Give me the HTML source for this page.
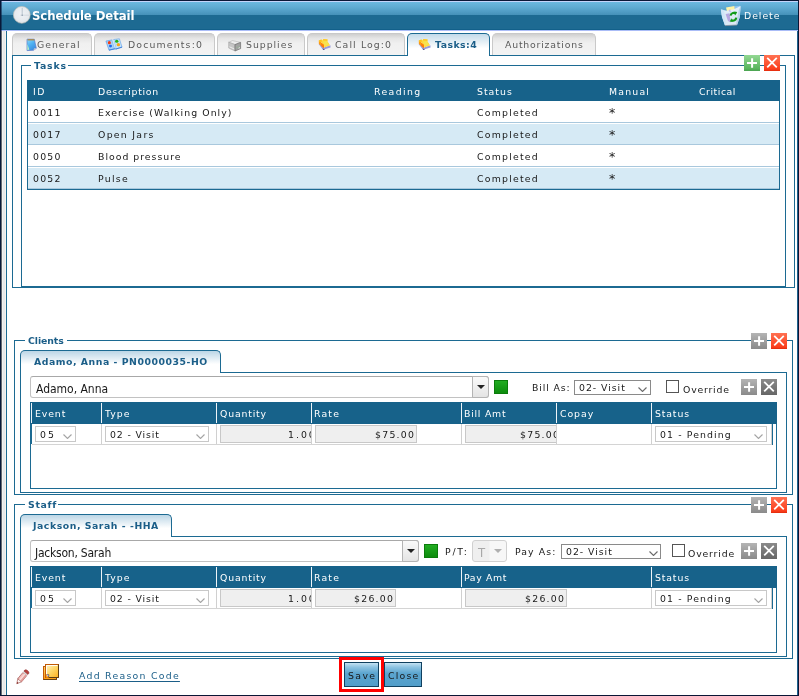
<!DOCTYPE html>
<html><head><meta charset="utf-8"><title>Schedule Detail</title>
<style>
*{box-sizing:border-box;margin:0;padding:0}
html,body{width:799px;height:696px;overflow:hidden;background:#fff}
body{position:relative;font-family:"DejaVu Sans","Liberation Sans",sans-serif;font-size:9.33px;letter-spacing:1px;color:#181818;line-height:12px}
.a{position:absolute}
.t{position:absolute;white-space:nowrap;height:12px;line-height:12px}
.b{font-weight:bold}
.blue{color:#1b5e88}
.w{color:#fff}
.g{color:#5a5a5a}
.tab{position:absolute;top:33px;height:22px;border:1px solid #c9c9c9;border-bottom:none;border-radius:5px 5px 0 0;background:linear-gradient(#cfcfcf,#e6e6e6 22%,#f0f0f0 45%,#f3f3f3)}
.atab{position:absolute;height:23px;border:1px solid #1c6a92;border-bottom:none;border-radius:5px 5px 0 0;background:linear-gradient(#c3dbe9,#fff 65%)}
.box{position:absolute;border:1px solid #1c6a92}
.hd{position:absolute;background:#17628a}
.sep{position:absolute;width:1px;background:#eef4f8}
.sel{position:absolute;border:1px solid #c8c8c8;background:#fff}
.inp{position:absolute;border:1px solid #c8c8c8;background:#efefef}
.vl{position:absolute;width:1px;background:#d0d0d0}
.ti{font-family:"DejaVu Sans Condensed","DejaVu Sans",sans-serif;font-size:12px}
.btn{position:absolute;height:25px;border:1px solid #10405f;background:linear-gradient(#c4e2f3,#8dc3e2 18%,#5ba5cf 45%,#529eca)}
.ic{position:absolute;width:16px;height:16px}
.lgb{position:absolute;background:#fff;height:3px}
#wrap{position:absolute;left:0;top:0;width:799px;height:696px;will-change:transform;transform:translateZ(0)}
</style></head><body><div id="wrap">
<!-- frame -->
<div class="a" style="left:0;top:0;width:799px;height:31px;background:#1d6a92"></div>
<div class="a" style="left:0;top:2px;width:799px;height:13px;background:linear-gradient(#6bb8e0,#5fabd3 40%,#4591b9)"></div>
<div class="a" style="left:0;top:0;width:799px;height:1px;background:#0b1738"></div>
<div class="a" style="left:0;top:1px;width:799px;height:1px;background:#c4d4fb"></div>
<div class="a" style="left:0;top:29px;width:799px;height:1px;background:#12608a"></div>
<div class="a" style="left:0;top:30px;width:799px;height:1px;background:#aabcf7"></div>
<div class="a" style="left:1px;top:31px;width:1px;height:664px;background:#676a70"></div>
<div class="a" style="left:2px;top:31px;width:1px;height:664px;background:#f0f0f0"></div>
<div class="a" style="left:3px;top:31px;width:2px;height:664px;background:#e8e8e8"></div>
<div class="a" style="left:5px;top:31px;width:1px;height:664px;background:#f4f1ef"></div>
<div class="a" style="left:6px;top:31px;width:1px;height:664px;background:#1c6a92"></div>
<div class="a" style="left:0;top:0;width:1px;height:696px;background:#081838"></div>
<div class="a" style="left:1px;top:0;width:1px;height:31px;background:rgba(10,24,56,0.55)"></div>
<div class="a" style="left:797px;top:31px;width:1px;height:665px;background:#1f6390"></div>
<div class="a" style="left:798px;top:0;width:1px;height:696px;background:#0a1636"></div>
<div class="a" style="left:0;top:695px;width:799px;height:1px;background:#0a1636"></div>

<svg width="0" height="0" class="a"><defs>
<linearGradient id="ggreen" x1="0" y1="0" x2="0" y2="1"><stop offset="0" stop-color="#93d893"/><stop offset="0.85" stop-color="#5ab65e"/><stop offset="1" stop-color="#4aa250"/></linearGradient>
<linearGradient id="gred" x1="0" y1="0" x2="0" y2="1"><stop offset="0" stop-color="#ff7152"/><stop offset="0.88" stop-color="#fb3e1c"/><stop offset="1" stop-color="#e02a0c"/></linearGradient>
<linearGradient id="ggray" x1="0" y1="0" x2="0" y2="1"><stop offset="0" stop-color="#b4b4b4"/><stop offset="1" stop-color="#8a8a8a"/></linearGradient>
<linearGradient id="gdgray" x1="0" y1="0" x2="0" y2="1"><stop offset="0" stop-color="#8a8a8a"/><stop offset="1" stop-color="#666"/></linearGradient>
</defs></svg>
<svg class="a" style="left:12px;top:5px" width="20" height="20" viewBox="0 0 20 20"><defs><radialGradient id="ck" cx="0.5" cy="0.45" r="0.55"><stop offset="0" stop-color="#eff2f5"/><stop offset="0.75" stop-color="#e6eaee"/><stop offset="1" stop-color="#d9dee3"/></radialGradient></defs><circle cx="9.8" cy="9.9" r="8.4" fill="url(#ck)" stroke="#c9c2b6" stroke-width="0.6"/><path d="M10.2 2.8V10.2" stroke="#a3b0bd" stroke-width="0.7" fill="none"/><path d="M8.4 10.2H17" stroke="#cdd3da" stroke-width="0.8" fill="none"/><circle cx="10.2" cy="10.2" r="0.7" fill="#8a99aa"/></svg>
<svg class="a" style="left:720px;top:4px" width="22" height="23" viewBox="0 0 22 23"><path d="M6 3.6L14.5 2L15 6.5L7 7.5Z" fill="#fff3a6"/><path d="M14.6 2.2L20.2 1.8L19.8 7L15.2 6.4Z" fill="#8fc3f5"/><path d="M0.9 5.6L7 6.8L14 5.2L20.6 2L19.8 13L17 21L5 21.6L2 13Z" fill="#e9f3fc" fill-opacity="0.93"/><path d="M0.9 5.6L4 6L6 20.5L5 21.6L2 13Z" fill="#cfe6f8"/><path d="M20.6 2L19.8 13L17 21L16 20L18.8 6Z" fill="#b9d4ea"/><path d="M5 21.6L17 21" stroke="#8a93a0" stroke-width="0.8"/><path d="M5.6 10L9.6 9.2L10.6 18.6L8 17Z" fill="#b6a8e2"/><path d="M8.6 6.8L10.2 5L11 9Z" fill="#c8bdea"/><g fill="none" stroke="#109a18" stroke-width="2.1"><path d="M10.6 11.6A3 3.2 0 0 1 15.4 9.6"/><path d="M16.2 13.6A3 3.2 0 0 1 11.4 16"/></g><path d="M14.2 7.4L17.2 8L15.4 11.4Z" fill="#109a18"/><path d="M12.8 18L9.8 17.4L11.4 14.2Z" fill="#109a18"/></svg>
<div class="t w" style="left:32px;top:10px;letter-spacing:-0.07px;font-family:'DejaVu Sans Condensed','DejaVu Sans',sans-serif;font-size:13px;font-weight:bold">Schedule Detail</div>
<div class="t w" style="left:744px;top:10px;letter-spacing:0.96px">Delete</div>
<div class="tab" style="left:12px;width:80px"></div>
<div class="tab" style="left:94px;width:121px"></div>
<div class="tab" style="left:217px;width:88px"></div>
<div class="tab" style="left:307px;width:98px"></div>
<div class="tab" style="left:492px;width:104px"></div>
<div class="t g" style="left:37px;top:39px;letter-spacing:0.98px">General</div>
<div class="t g" style="left:128px;top:39px;letter-spacing:1.16px">Documents:0</div>
<div class="t g" style="left:246px;top:39px;letter-spacing:0.97px">Supplies</div>
<div class="t g" style="left:335px;top:39px;letter-spacing:1.10px">Call Log:0</div>
<div class="t g" style="left:505px;top:39px;letter-spacing:0.80px">Authorizations</div>
<div class="box" style="left:12px;top:55px;width:783px;height:233px"></div>
<div class="atab" style="left:407px;top:33px;width:83px"></div>
<div class="box" style="left:21px;top:65px;width:765px;height:222px"></div>
<div class="lgb" style="left:31px;top:64px;width:37px"></div>
<div class="t b blue" style="left:435px;top:39px;letter-spacing:0.47px;font-weight:bold">Tasks:4</div>
<svg class="a" style="left:25.5px;top:38.2px" width="12" height="14" viewBox="0 0 12 14"><defs><linearGradient id="np" x1="0" y1="0" x2="0.6" y2="1"><stop offset="0" stop-color="#8fdcf8"/><stop offset="0.5" stop-color="#4fb2f2"/><stop offset="1" stop-color="#3a8ce0"/></linearGradient></defs><path d="M1 1.2L8.3 1.2L10.3 10.3L7.6 12.2L1 12.6Z" fill="url(#np)" stroke="#5b78c8" stroke-width="0.7"/><path d="M1.3 6L3.4 11.6L1.3 12.2Z" fill="#b9ecc4"/><path d="M1.6 1L8.2 1L8.5 2.6L1.6 2.6Z" fill="#a48d5c"/><path d="M7.6 12.2L10.3 10.3L8 10.6Z" fill="#e8d8c8"/></svg>
<svg class="a" style="left:105px;top:38px" width="18" height="13.3" viewBox="0 0 19 14"><path d="M1 3.2L7.6 2L10.4 11.4L4.2 12.8Z" fill="#a6d2f7" stroke="#5a9ae6" stroke-width="0.7"/><path d="M9 1.6L15.2 0.8L18 9.6L11.6 11.6Z" fill="#c2e2fa" stroke="#6aa6ea" stroke-width="0.7"/><path d="M7.6 2L9 1.6L11.6 11.6L10.4 11.4Z" fill="#cfe8fb"/><ellipse cx="4.6" cy="4.9" rx="1.6" ry="1.8" fill="#f43a12"/><ellipse cx="5.8" cy="8.5" rx="1.6" ry="1.5" fill="#1f66ee"/><ellipse cx="12.4" cy="3.4" rx="1.8" ry="1.7" fill="#22b41c"/><ellipse cx="14.1" cy="7" rx="1.8" ry="1.7" fill="#f7a81a"/><path d="M4.2 12.8L10.4 11.4L11.6 11.6L18 9.6" fill="none" stroke="#3d7fdc" stroke-width="1"/></svg>
<svg class="a" style="left:228px;top:39.6px" width="14" height="12" viewBox="0 0 14 12"><path d="M0.7 2.2L4.6 0.6L12.6 2.4L7 4.6Z" fill="#eeeeee" stroke="#a8a8a8" stroke-width="0.5"/><path d="M0.7 2.2L7 4.6L7 11L0.7 8Z" fill="#c6c6c6" stroke="#9a9a9a" stroke-width="0.5"/><path d="M7 4.6L12.6 2.4L12.6 8.6L7 11Z" fill="#a2a2a2" stroke="#6e6e6e" stroke-width="0.7"/><path d="M1.5 6.8L6.3 9" stroke="#ededed" stroke-width="1"/><path d="M7.8 8L11.8 6.4" stroke="#8fb38f" stroke-width="0.6"/><path d="M10.6 8.2L11.8 7.7" stroke="#f4f4f4" stroke-width="1"/></svg>
<svg class="a" style="left:318px;top:38px" width="14" height="13" viewBox="0 0 14 13"><path d="M0.8 6.2L5 11.8L12.6 9.4L12.4 7.2L6 9.4L1 5Z" fill="#9a9bdc"/><path d="M4.6 10.6L5.2 11.9L7.2 11.4Z" fill="#4a4a80"/><path d="M0.8 2.4L0.9 6L6 10.2L6.2 6.6Z" fill="#ff9a12"/><path d="M3 5L6.1 7.2L6 10.2L3.4 8.2Z" fill="#ff7e0a"/><path d="M0.8 2.4L3.4 1.6L4.6 2.4L5.2 0.9L9.6 1.6L9.4 3.2L12 7.2L6.2 9.6L6.2 6.6Z" fill="#ffd83a"/><path d="M4.8 3.6L9 3L11 6.8L6.8 8Z" fill="#f7e34e"/><path d="M0.8 2.4L3.4 1.6L4 3.6L1.6 4.2Z" fill="#ffc21e"/><path d="M5.2 0.9L9.6 1.6L9.2 3L5.4 2.6Z" fill="#ffc928"/></svg>
<svg class="a" style="left:418px;top:38.3px" width="14" height="13" viewBox="0 0 14 13"><path d="M0.8 6.2L5 11.8L12.6 9.4L12.4 7.2L6 9.4L1 5Z" fill="#9a9bdc"/><path d="M4.6 10.6L5.2 11.9L7.2 11.4Z" fill="#4a4a80"/><path d="M0.8 2.4L0.9 6L6 10.2L6.2 6.6Z" fill="#ff9a12"/><path d="M3 5L6.1 7.2L6 10.2L3.4 8.2Z" fill="#ff7e0a"/><path d="M0.8 2.4L3.4 1.6L4.6 2.4L5.2 0.9L9.6 1.6L9.4 3.2L12 7.2L6.2 9.6L6.2 6.6Z" fill="#ffd83a"/><path d="M4.8 3.6L9 3L11 6.8L6.8 8Z" fill="#f7e34e"/><path d="M0.8 2.4L3.4 1.6L4 3.6L1.6 4.2Z" fill="#ffc21e"/><path d="M5.2 0.9L9.6 1.6L9.2 3L5.4 2.6Z" fill="#ffc928"/></svg>
<div class="t b blue" style="left:34px;top:60px;letter-spacing:0.80px;font-weight:bold">Tasks</div>
<svg class="ic" style="left:744px;top:55px" viewBox="0 0 16 16"><rect width="16" height="16" fill="url(#ggreen)"/><path d="M8.1 3.2V12.8M3 8H13" stroke="#fff" stroke-width="2"/></svg>
<svg class="ic" style="left:764px;top:55px" viewBox="0 0 16 16"><rect width="16" height="16" fill="url(#gred)"/><path d="M3.2 2.8L12.8 12.4M12.8 2.8L3.2 12.4" stroke="#fff" stroke-width="1.8"/></svg>
<div class="box" style="left:27px;top:80px;width:753px;height:110px;background:#fff"></div>
<div class="hd" style="left:27px;top:80px;width:753px;height:21px"></div>
<div class="a" style="left:28px;top:101px;width:751px;height:22px;border-bottom:1px solid #a9c8dd"></div>
<div class="a" style="left:28px;top:123px;width:751px;height:22px;background:#d6eaf5;border-top:1px solid #fff;border-bottom:1px solid #a9c8dd"></div>
<div class="a" style="left:28px;top:145px;width:751px;height:22px;border-bottom:1px solid #a9c8dd"></div>
<div class="a" style="left:28px;top:167px;width:751px;height:22px;background:#d6eaf5;border-top:1px solid #fff;border-bottom:1px solid #a9c8dd"></div>

<div class="t w" style="left:33px;top:86px;letter-spacing:1.60px">ID</div>
<div class="t w" style="left:98px;top:86px;letter-spacing:0.70px">Description</div>
<div class="t w" style="left:374px;top:86px;letter-spacing:1.38px">Reading</div>
<div class="t w" style="left:477px;top:86px;letter-spacing:1.01px">Status</div>
<div class="t w" style="left:609px;top:86px;letter-spacing:1.21px">Manual</div>
<div class="t w" style="left:699px;top:86px;letter-spacing:0.54px">Critical</div>
<div class="t" style="left:33px;top:107px;letter-spacing:1.20px">0011</div>
<div class="t" style="left:98px;top:107px;letter-spacing:1.06px">Exercise (Walking Only)</div>
<div class="t" style="left:477px;top:107px;letter-spacing:1.23px">Completed</div>
<div class="t" style="left:609px;top:107px;letter-spacing:0.00px;font-size:12.5px">*</div>
<div class="t" style="left:33px;top:129px;letter-spacing:1.20px">0017</div>
<div class="t" style="left:98px;top:129px;letter-spacing:1.29px">Open Jars</div>
<div class="t" style="left:477px;top:129px;letter-spacing:1.23px">Completed</div>
<div class="t" style="left:609px;top:129px;letter-spacing:0.00px;font-size:12.5px">*</div>
<div class="t" style="left:33px;top:151px;letter-spacing:1.20px">0050</div>
<div class="t" style="left:98px;top:151px;letter-spacing:1.00px">Blood pressure</div>
<div class="t" style="left:477px;top:151px;letter-spacing:1.23px">Completed</div>
<div class="t" style="left:609px;top:151px;letter-spacing:0.00px;font-size:12.5px">*</div>
<div class="t" style="left:33px;top:173px;letter-spacing:1.20px">0052</div>
<div class="t" style="left:98px;top:173px;letter-spacing:1.30px">Pulse</div>
<div class="t" style="left:477px;top:173px;letter-spacing:1.23px">Completed</div>
<div class="t" style="left:609px;top:173px;letter-spacing:0.00px;font-size:12.5px">*</div>
<div class="box" style="left:14px;top:340px;width:779px;height:155px"></div>
<div class="lgb" style="left:25px;top:339px;width:42px"></div>
<div class="t b blue" style="left:28px;top:335px;letter-spacing:-0.08px;font-weight:bold">Clients</div>
<svg class="ic" style="left:751px;top:333px" viewBox="0 0 16 16"><rect width="16" height="16" fill="url(#ggray)"/><path d="M8.1 3.2V12.8M3 8H13" stroke="#fff" stroke-width="2"/></svg>
<svg class="ic" style="left:771px;top:333px" viewBox="0 0 16 16"><rect width="16" height="16" fill="url(#gred)"/><path d="M3.2 2.8L12.8 12.4M12.8 2.8L3.2 12.4" stroke="#fff" stroke-width="1.8"/></svg>
<div class="box" style="left:20px;top:372px;width:767px;height:121px"></div>
<div class="atab" style="left:20px;top:350px;width:201px;background:linear-gradient(#bcd6e6,#fff 60%)"></div>
<div class="t b blue" style="left:34px;top:356px;letter-spacing:0.53px;font-weight:bold">Adamo, Anna - PN0000035-HO</div>
<div class="a" style="left:30px;top:376px;width:459px;height:22px;border:1px solid #c2c2c2;border-top-color:#a8a8a8;border-radius:3px;background:#fff"></div>
<div class="t ti" style="left:36px;top:383px;letter-spacing:-0.02px;font-family:'DejaVu Sans Condensed','DejaVu Sans',sans-serif;font-size:12px">Adamo, Anna</div>
<div class="a" style="left:472px;top:376px;width:17px;height:22px;border:1px solid #b4b4b4;border-radius:0 3px 3px 0;background:linear-gradient(#fafafa,#e4e4e4)"></div>
<svg class="a" style="left:477px;top:385px" width="8" height="4"><path d="M0 0H8L4 4Z" fill="#222"/></svg>
<div class="a" style="left:494px;top:380px;width:14px;height:14px;background:linear-gradient(#22ad22,#0d8c0d);border:1px solid #0b7c0b"></div>
<div class="t" style="left:532px;top:382px;letter-spacing:0.86px">Bill As:</div>
<div class="sel" style="left:574px;top:380px;width:77px;height:15px;border-color:#8a8a8a"></div>
<div class="t" style="left:579px;top:382px;letter-spacing:0.97px">02- Visit</div>
<svg class="a" style="left:638px;top:387px" width="9" height="5"><path d="M0.5 0.5L4.5 4.5L8.5 0.5" fill="none" stroke="#6a6a6a" stroke-width="1.1"/></svg>
<div class="a" style="left:666px;top:380px;width:13px;height:13px;border:1px solid #555;background:#fff"></div>
<div class="t" style="left:683px;top:384px;letter-spacing:0.79px">Override</div>
<svg class="ic" style="left:741px;top:379px" viewBox="0 0 16 16"><rect width="16" height="16" fill="url(#ggray)"/><path d="M8.1 3.2V12.8M3 8H13" stroke="#fff" stroke-width="2"/></svg>
<svg class="ic" style="left:761px;top:379px" viewBox="0 0 16 16"><rect width="16" height="16" fill="url(#gdgray)"/><path d="M3.2 2.8L12.8 12.4M12.8 2.8L3.2 12.4" stroke="#fff" stroke-width="1.8"/></svg>
<div class="box" style="left:30px;top:402px;width:747px;height:87px"></div>
<div class="hd" style="left:30px;top:402px;width:747px;height:22px"></div>
<div class="t w" style="left:35px;top:408px;letter-spacing:0.89px">Event</div>
<div class="t w" style="left:105px;top:408px;letter-spacing:1.02px">Type</div>
<div class="t w" style="left:220px;top:408px;letter-spacing:0.83px">Quantity</div>
<div class="t w" style="left:314px;top:408px;letter-spacing:1.18px">Rate</div>
<div class="t w" style="left:464px;top:408px;letter-spacing:0.76px">Bill Amt</div>
<div class="t w" style="left:560px;top:408px;letter-spacing:0.95px">Copay</div>
<div class="t w" style="left:655px;top:408px;letter-spacing:0.86px">Status</div>
<div class="sep" style="left:31px;top:403px;height:20px"></div>
<div class="sep" style="left:101px;top:403px;height:20px"></div>
<div class="sep" style="left:216px;top:403px;height:20px"></div>
<div class="sep" style="left:311px;top:403px;height:20px"></div>
<div class="sep" style="left:461px;top:403px;height:20px"></div>
<div class="sep" style="left:556px;top:403px;height:20px"></div>
<div class="sep" style="left:651px;top:403px;height:20px"></div>
<div class="a" style="left:30px;top:424px;width:2px;height:20px;background:#1c6a92"></div>
<div class="a" style="left:32px;top:444px;width:740px;height:1px;background:#d4d4d4"></div>
<div class="vl" style="left:101px;top:424px;height:20px"></div>
<div class="vl" style="left:216px;top:424px;height:20px"></div>
<div class="vl" style="left:311px;top:424px;height:20px"></div>
<div class="vl" style="left:461px;top:424px;height:20px"></div>
<div class="vl" style="left:556px;top:424px;height:20px"></div>
<div class="vl" style="left:651px;top:424px;height:20px"></div>
<div class="vl" style="left:771px;top:424px;height:21px"></div>
<div class="a" style="left:772px;top:424px;width:1px;height:21px;background:#1c6a92"></div>
<div class="sel" style="left:35px;top:426px;width:41px;height:16px"></div>
<div class="t" style="left:40px;top:429px;letter-spacing:2.00px">05</div>
<svg class="a" style="left:63px;top:434px" width="9" height="5"><path d="M0.5 0.5L4.5 4.5L8.5 0.5" fill="none" stroke="#a4a4a4" stroke-width="1.1"/></svg>
<div class="sel" style="left:105px;top:426px;width:104px;height:16px"></div>
<div class="t" style="left:110px;top:429px;letter-spacing:0.87px">02 - Visit</div>
<svg class="a" style="left:196px;top:434px" width="9" height="5"><path d="M0.5 0.5L4.5 4.5L8.5 0.5" fill="none" stroke="#a4a4a4" stroke-width="1.1"/></svg>
<div class="inp" style="left:220px;top:425px;width:91px;height:18px;border-right:none"></div>
<div class="a" style="left:280px;top:427px;width:31px;height:14px;overflow:hidden"><div class="t" style="left:8px;top:2px;letter-spacing:2.00px">1.00</div></div>
<div class="inp" style="left:315px;top:425px;width:102px;height:18px"></div>
<div class="t" style="left:375px;top:429px;letter-spacing:1.26px">$75.00</div>
<div class="inp" style="left:465px;top:425px;width:91px;height:18px;border-right:none"></div>
<div class="a" style="left:510px;top:427px;width:46px;height:14px;overflow:hidden"><div class="t" style="left:10px;top:2px;letter-spacing:1.26px">$75.00</div></div>
<div class="sel" style="left:655px;top:426px;width:112px;height:16px"></div>
<div class="t" style="left:660px;top:429px;letter-spacing:1.12px">01 - Pending</div>
<svg class="a" style="left:754px;top:434px" width="9" height="5"><path d="M0.5 0.5L4.5 4.5L8.5 0.5" fill="none" stroke="#a4a4a4" stroke-width="1.1"/></svg>
<div class="box" style="left:14px;top:504px;width:779px;height:155px"></div>
<div class="lgb" style="left:25px;top:503px;width:33px"></div>
<div class="t b blue" style="left:28px;top:499px;letter-spacing:0.66px;font-weight:bold">Staff</div>
<svg class="ic" style="left:751px;top:497px" viewBox="0 0 16 16"><rect width="16" height="16" fill="url(#ggray)"/><path d="M8.1 3.2V12.8M3 8H13" stroke="#fff" stroke-width="2"/></svg>
<svg class="ic" style="left:771px;top:497px" viewBox="0 0 16 16"><rect width="16" height="16" fill="url(#gred)"/><path d="M3.2 2.8L12.8 12.4M12.8 2.8L3.2 12.4" stroke="#fff" stroke-width="1.8"/></svg>
<div class="box" style="left:20px;top:536px;width:767px;height:121px"></div>
<div class="atab" style="left:20px;top:514px;width:152px;background:linear-gradient(#bcd6e6,#fff 60%)"></div>
<div class="t b blue" style="left:33px;top:520px;letter-spacing:0.54px;font-weight:bold">Jackson, Sarah - -HHA</div>
<div class="a" style="left:30px;top:540px;width:389px;height:22px;border:1px solid #c2c2c2;border-top-color:#a8a8a8;border-radius:3px;background:#fff"></div>
<div class="t ti" style="left:35px;top:547px;letter-spacing:-0.23px;font-family:'DejaVu Sans Condensed','DejaVu Sans',sans-serif;font-size:12px">Jackson, Sarah</div>
<div class="a" style="left:402px;top:540px;width:17px;height:22px;border:1px solid #b4b4b4;border-radius:0 3px 3px 0;background:linear-gradient(#fafafa,#e4e4e4)"></div>
<svg class="a" style="left:407px;top:549px" width="8" height="4"><path d="M0 0H8L4 4Z" fill="#222"/></svg>
<div class="a" style="left:424px;top:544px;width:14px;height:14px;background:linear-gradient(#22ad22,#0d8c0d);border:1px solid #0b7c0b"></div>
<div class="t" style="left:445px;top:546px;letter-spacing:1.77px">P/T:</div>
<div class="a" style="left:472px;top:540px;width:35px;height:22px;border:1px solid #d0d0d0;border-radius:3px;background:linear-gradient(90deg,#efefef 0,#efefef 16px,#f7f7f7 17px,#f7f7f7)"></div>
<div class="t ti" style="left:478px;top:547px;letter-spacing:0.00px;font-family:'DejaVu Sans Condensed','DejaVu Sans',sans-serif;font-size:12px;font-size:13px;color:#a8a8a8">T</div>
<svg class="a" style="left:494px;top:549px" width="8" height="4"><path d="M0 0H8L4 4Z" fill="#b0b0b0"/></svg>
<div class="t" style="left:515px;top:546px;letter-spacing:1.09px">Pay As:</div>
<div class="sel" style="left:561px;top:544px;width:100px;height:15px;border-color:#8a8a8a"></div>
<div class="t" style="left:566px;top:546px;letter-spacing:0.97px">02- Visit</div>
<svg class="a" style="left:649px;top:551px" width="9" height="5"><path d="M0.5 0.5L4.5 4.5L8.5 0.5" fill="none" stroke="#6a6a6a" stroke-width="1.1"/></svg>
<div class="a" style="left:672px;top:544px;width:13px;height:13px;border:1px solid #555;background:#fff"></div>
<div class="t" style="left:688px;top:548px;letter-spacing:0.83px">Override</div>
<svg class="ic" style="left:741px;top:543px" viewBox="0 0 16 16"><rect width="16" height="16" fill="url(#ggray)"/><path d="M8.1 3.2V12.8M3 8H13" stroke="#fff" stroke-width="2"/></svg>
<svg class="ic" style="left:761px;top:543px" viewBox="0 0 16 16"><rect width="16" height="16" fill="url(#gdgray)"/><path d="M3.2 2.8L12.8 12.4M12.8 2.8L3.2 12.4" stroke="#fff" stroke-width="1.8"/></svg>
<div class="box" style="left:30px;top:566px;width:747px;height:87px"></div>
<div class="hd" style="left:30px;top:566px;width:747px;height:22px"></div>
<div class="t w" style="left:35px;top:572px;letter-spacing:0.89px">Event</div>
<div class="t w" style="left:105px;top:572px;letter-spacing:1.02px">Type</div>
<div class="t w" style="left:220px;top:572px;letter-spacing:0.83px">Quantity</div>
<div class="t w" style="left:314px;top:572px;letter-spacing:1.18px">Rate</div>
<div class="t w" style="left:464px;top:572px;letter-spacing:0.63px">Pay Amt</div>
<div class="t w" style="left:655px;top:572px;letter-spacing:0.86px">Status</div>
<div class="sep" style="left:31px;top:567px;height:20px"></div>
<div class="sep" style="left:101px;top:567px;height:20px"></div>
<div class="sep" style="left:216px;top:567px;height:20px"></div>
<div class="sep" style="left:311px;top:567px;height:20px"></div>
<div class="sep" style="left:461px;top:567px;height:20px"></div>
<div class="sep" style="left:651px;top:567px;height:20px"></div>
<div class="a" style="left:30px;top:588px;width:2px;height:20px;background:#1c6a92"></div>
<div class="a" style="left:32px;top:608px;width:740px;height:1px;background:#d4d4d4"></div>
<div class="vl" style="left:101px;top:588px;height:20px"></div>
<div class="vl" style="left:216px;top:588px;height:20px"></div>
<div class="vl" style="left:311px;top:588px;height:20px"></div>
<div class="vl" style="left:461px;top:588px;height:20px"></div>
<div class="vl" style="left:651px;top:588px;height:20px"></div>
<div class="vl" style="left:771px;top:588px;height:21px"></div>
<div class="a" style="left:772px;top:588px;width:1px;height:21px;background:#1c6a92"></div>
<div class="sel" style="left:35px;top:590px;width:41px;height:16px"></div>
<div class="t" style="left:40px;top:593px;letter-spacing:2.00px">05</div>
<svg class="a" style="left:63px;top:598px" width="9" height="5"><path d="M0.5 0.5L4.5 4.5L8.5 0.5" fill="none" stroke="#a4a4a4" stroke-width="1.1"/></svg>
<div class="sel" style="left:105px;top:590px;width:104px;height:16px"></div>
<div class="t" style="left:110px;top:593px;letter-spacing:0.87px">02 - Visit</div>
<svg class="a" style="left:196px;top:598px" width="9" height="5"><path d="M0.5 0.5L4.5 4.5L8.5 0.5" fill="none" stroke="#a4a4a4" stroke-width="1.1"/></svg>
<div class="inp" style="left:220px;top:589px;width:91px;height:18px;border-right:none"></div>
<div class="a" style="left:280px;top:591px;width:31px;height:14px;overflow:hidden"><div class="t" style="left:8px;top:2px;letter-spacing:2.00px">1.00</div></div>
<div class="inp" style="left:315px;top:589px;width:81px;height:18px"></div>
<div class="t" style="left:354px;top:593px;letter-spacing:1.26px">$26.00</div>
<div class="inp" style="left:465px;top:589px;width:102px;height:18px"></div>
<div class="t" style="left:525px;top:593px;letter-spacing:1.26px">$26.00</div>
<div class="sel" style="left:655px;top:590px;width:112px;height:16px"></div>
<div class="t" style="left:660px;top:593px;letter-spacing:1.12px">01 - Pending</div>
<svg class="a" style="left:754px;top:598px" width="9" height="5"><path d="M0.5 0.5L4.5 4.5L8.5 0.5" fill="none" stroke="#a4a4a4" stroke-width="1.1"/></svg>
<svg class="a" style="left:14px;top:667px" width="18" height="20" viewBox="0 0 18 20"><g transform="translate(2.8,16.7) rotate(-50.2)"><path d="M0 0L4.6 -2.5L4.6 2.5Z" fill="#fdf6f4" stroke="#9a4a46" stroke-width="0.6"/><path d="M0 0L1.6 -0.9L1.6 0.9Z" fill="#7a1510"/><rect x="4.6" y="-2.5" width="8" height="5" fill="#f2bcb8" stroke="#9a4a46" stroke-width="0.6"/><rect x="4.6" y="-0.9" width="8" height="1.8" fill="#f9dad7"/><rect x="4.6" y="0.9" width="8" height="1.5" fill="#e29c98"/><rect x="12.6" y="-2.6" width="1.7" height="5.2" fill="#d4d4d4"/><path d="M14.3 -2.6H15.6Q17 -2.4 17 0Q17 2.4 15.6 2.6H14.3Z" fill="#b8403c" stroke="#8a2a28" stroke-width="0.5"/></g></svg>
<svg class="a" style="left:42px;top:663px" width="18" height="18" viewBox="0 0 18 18"><defs><linearGradient id="n1" x1="0" y1="0" x2="1" y2="1"><stop offset="0" stop-color="#fff6cf"/><stop offset="0.5" stop-color="#ffd766"/><stop offset="1" stop-color="#ffb01e"/></linearGradient><linearGradient id="n2" x1="0" y1="0" x2="0" y2="1"><stop offset="0" stop-color="#ffd56a"/><stop offset="1" stop-color="#ff9c0c"/></linearGradient></defs><rect x="1.5" y="3.5" width="13" height="13" fill="url(#n2)" stroke="#c25a06" stroke-width="1"/><path d="M14.5 14.5V16.5H1.5" fill="none" stroke="#6a4414" stroke-width="1"/><rect x="3.5" y="1.5" width="13" height="13" fill="url(#n1)" stroke="#c25a06" stroke-width="1"/><path d="M4.5 13.5V2.5H15.5" fill="none" stroke="#fffdf2" stroke-width="1"/><path d="M16.5 1.5V14.5H6.5" fill="none" stroke="#5e3d12" stroke-width="1"/><path d="M4 11L7 14.5H4Z" fill="#ffa418"/><path d="M4.2 11L7.2 11.4L7 14.6Z" fill="#5a4630"/><circle cx="5.7" cy="12.4" r="0.9" fill="#b9b6f2"/></svg>
<div class="t blue" style="left:79px;top:670px;letter-spacing:1.27px;text-decoration:underline;text-underline-offset:1.5px">Add Reason Code</div>
<div class="a" style="left:339px;top:657px;width:45px;height:35px;border:3px solid #f00"></div>
<div class="btn" style="left:344px;top:662px;width:35px"></div>
<div class="btn" style="left:384px;top:662px;width:38px"></div>
<div class="t" style="left:348px;top:670px;letter-spacing:1.40px">Save</div>
<div class="t" style="left:388px;top:670px;letter-spacing:1.20px">Close</div>
</div></body></html>
